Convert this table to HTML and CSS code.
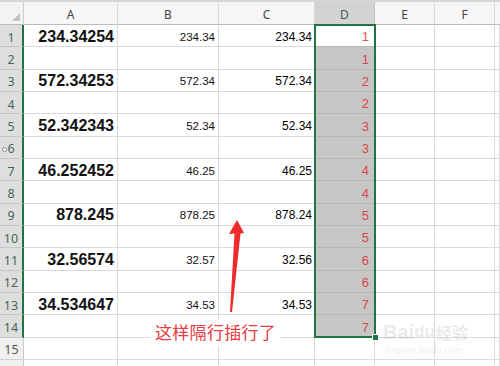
FILE: index.html
```html
<!DOCTYPE html>
<html lang="zh">
<head>
<meta charset="utf-8">
<title>Sheet</title>
<link rel="stylesheet" href="styles.css">
</head>
<body>
<div class="sheet">
  <div class="topbar"></div>
  <div class="grid">
    <div class="corner"><span class="tri"></span></div>
    <div class="ch">A</div><div class="ch">B</div><div class="ch">C</div><div class="ch chsel">D</div><div class="ch">E</div><div class="ch">F</div><div class="ch last"></div>

    <div class="rh sel">1</div><div class="c a">234.34254</div><div class="c b">234.34</div><div class="c cc">234.34</div><div class="c d act">1</div><div class="c"></div><div class="c"></div><div class="c"></div>
    <div class="rh sel">2</div><div class="c"></div><div class="c"></div><div class="c"></div><div class="c d">1</div><div class="c"></div><div class="c"></div><div class="c"></div>
    <div class="rh sel">3</div><div class="c a">572.34253</div><div class="c b">572.34</div><div class="c cc">572.34</div><div class="c d">2</div><div class="c"></div><div class="c"></div><div class="c"></div>
    <div class="rh sel">4</div><div class="c"></div><div class="c"></div><div class="c"></div><div class="c d">2</div><div class="c"></div><div class="c"></div><div class="c"></div>
    <div class="rh sel">5</div><div class="c a">52.342343</div><div class="c b">52.34</div><div class="c cc">52.34</div><div class="c d">3</div><div class="c"></div><div class="c"></div><div class="c"></div>
    <div class="rh sel"><span class="dot"></span>6</div><div class="c"></div><div class="c"></div><div class="c"></div><div class="c d">3</div><div class="c"></div><div class="c"></div><div class="c"></div>
    <div class="rh sel">7</div><div class="c a">46.252452</div><div class="c b">46.25</div><div class="c cc">46.25</div><div class="c d">4</div><div class="c"></div><div class="c"></div><div class="c"></div>
    <div class="rh sel">8</div><div class="c"></div><div class="c"></div><div class="c"></div><div class="c d">4</div><div class="c"></div><div class="c"></div><div class="c"></div>
    <div class="rh sel">9</div><div class="c a">878.245</div><div class="c b">878.25</div><div class="c cc">878.24</div><div class="c d">5</div><div class="c"></div><div class="c"></div><div class="c"></div>
    <div class="rh sel">10</div><div class="c"></div><div class="c"></div><div class="c"></div><div class="c d">5</div><div class="c"></div><div class="c"></div><div class="c"></div>
    <div class="rh sel">11</div><div class="c a">32.56574</div><div class="c b">32.57</div><div class="c cc">32.56</div><div class="c d">6</div><div class="c"></div><div class="c"></div><div class="c"></div>
    <div class="rh sel">12</div><div class="c"></div><div class="c"></div><div class="c"></div><div class="c d">6</div><div class="c"></div><div class="c"></div><div class="c"></div>
    <div class="rh sel">13</div><div class="c a">34.534647</div><div class="c b">34.53</div><div class="c cc">34.53</div><div class="c d">7</div><div class="c"></div><div class="c"></div><div class="c"></div>
    <div class="rh sel">14</div><div class="c"></div><div class="c"></div><div class="c"></div><div class="c d">7</div><div class="c"></div><div class="c"></div><div class="c"></div>
    <div class="rh">15</div><div class="c"></div><div class="c"></div><div class="c"></div><div class="c"></div><div class="c"></div><div class="c"></div><div class="c"></div>
    <div class="rh"></div><div class="c"></div><div class="c"></div><div class="c"></div><div class="c"></div><div class="c"></div><div class="c"></div><div class="c"></div>
  </div>

  <div class="selbox"><span class="handle"></span></div>

  <svg class="arrow" width="20" height="100" viewBox="0 0 20 100">
    <polygon points="10,0 17,13 13.5,13.5 5,92 3,92 7.5,13.5 2,14" fill="#ee2b2b"/>
  </svg>

  <div class="caption">这样隔行插行了</div>

  <div class="wm">
    <div class="wm-top"><span class="wm-bai">Bai</span><span class="wm-paw">du</span><span class="wm-jy">经验</span></div>
    <div class="wm-url">jingyan.baidu.com</div>
  </div>
</div>
</body>
</html>
```

FILE: styles.css
```css
* { box-sizing: border-box; }
html, body { margin: 0; padding: 0; background: #fff; }
body { width: 500px; height: 366px; overflow: hidden; font-family: "Liberation Sans", Arial, sans-serif; }

.sheet { position: relative; width: 500px; height: 366px; overflow: hidden; }

.topbar { height: 2px; background: #d6d6d6; }

.grid {
  display: grid;
  grid-template-columns: 24px 94px 101px 96px 60px 60px 60px 1fr;
  grid-template-rows: 23px repeat(16, 22.35px);
}

.corner {
  position: relative;
  background: #f3f3f3;
  border-right: 1px solid #cfcfcf;
  border-bottom: 1px solid #bdbdbd;
}
.tri {
  position: absolute;
  right: 3px; bottom: 3px;
  width: 0; height: 0;
  border-left: 8px solid transparent;
  border-bottom: 8px solid #c2c2c2;
}

.ch {
  display: flex; align-items: center; justify-content: center;
  background: #f6f6f6;
  border-right: 1px solid #dcdcdc;
  border-bottom: 1px solid #bdbdbd;
  font-family: "Noto Sans", "Liberation Sans", sans-serif;
  font-size: 12px;
  color: #444;
  padding-top: 2px;
}
.ch.chsel { background: #d3d3d3; color: #3e5e4a; border-right-color: #c4c4c4; }
.ch.last { border-right: none; }

.rh {
  position: relative;
  display: flex; align-items: center; justify-content: center;
  background: #f0f0f0;
  border-right: 1px solid #c8c8c8;
  border-bottom: 1px solid #d2d2d2;
  font-family: "Noto Sans", "Liberation Sans", sans-serif;
  font-size: 12.5px;
  color: #555;
  padding-top: 3px;
}
.rh.sel {
  background: #dedede;
  color: #4b6653;
  border-right: 2px solid #217346;
  border-bottom-color: #c6c6c6;
}
.dot {
  position: absolute;
  left: 2px; top: 10px;
  width: 5px; height: 5px;
  border: 1px solid #888;
  border-radius: 50%;
  background: #fff;
}

.c {
  display: flex; align-items: center; justify-content: flex-end;
  border-right: 1px solid #dadada;
  border-bottom: 1px solid #dadada;
  background: #fff;
  color: #111;
  padding-top: 2px;
  white-space: nowrap;
}
.c.a { font-size: 16px; font-weight: bold; padding-right: 3px; }
.c.b { font-size: 11.5px; padding-right: 3px; }
.c.cc { font-size: 12px; padding-right: 2px; color: #000; }
.c.d {
  background: #c6c6c6;
  border-bottom-color: #b6b6b6;
  color: #d8474a;
  font-size: 13px;
  padding-right: 5px;
}
.c.d.act { background: #fff; color: #e25357; }

.selbox {
  position: absolute;
  left: 314px; top: 23.5px;
  width: 62px; height: 314.5px;
  border: 2px solid #217346;
  pointer-events: none;
}
.handle {
  position: absolute;
  right: -5px; bottom: -5px;
  width: 7px; height: 7px;
  background: #217346;
  border: 1px solid #fff;
}

.arrow { position: absolute; left: 227px; top: 220px; }

.caption {
  position: absolute;
  left: 150px; top: 320px;
  padding: 0 5px;
  height: 26px;
  line-height: 24px;
  background: #fff;
  color: #ea3a3f;
  font-family: "Noto Sans CJK SC", sans-serif;
  font-size: 17px;
  letter-spacing: 0.3px;
}

.wm {
  position: absolute;
  left: 383px; top: 322px;
  color: rgba(120, 120, 120, 0.16);
  font-family: "Liberation Sans", "Noto Sans CJK SC", sans-serif;
}
.wm-top { display: flex; align-items: flex-end; font-weight: bold; font-size: 20px; line-height: 20px; }
.wm-paw { font-size: 17px; }
.wm-jy { font-size: 16px; font-family: "Noto Sans CJK SC", sans-serif; margin-left: 1px; }
.wm-url { font-size: 9px; margin-top: 3px; margin-left: 2px; letter-spacing: 0.3px; }
```
